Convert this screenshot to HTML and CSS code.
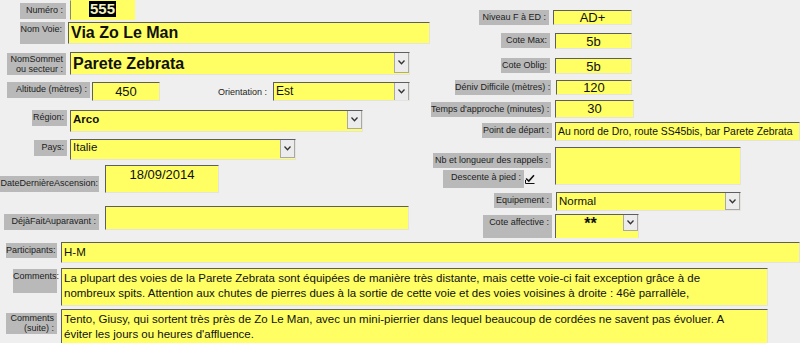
FILE: index.html
```html
<!DOCTYPE html>
<html lang="fr">
    <head>
        <meta charset="UTF-8" />
        <meta name="viewport" content="width=device-width, initial-scale=1.0"/>
        <title>Voie</title>
        <link rel="stylesheet" href="styles.css">
    </head>
    <body>
        <div class="form">
            <div class="top">
                <div class="col-left">
                    <div class="row r-numero">
                        <div class="lbl l-numero">Numéro :</div>
                        <div class="fld f-numero"><span class="sel">555</span></div>
                    </div>
                    <div class="row r-nomvoie">
                        <div class="lbl l-nomvoie">Nom Voie:</div>
                        <div class="fld f-nomvoie">Via Zo Le Man</div>
                    </div>
                    <div class="row r-sommet">
                        <div class="lbl l-sommet">NomSommet<br>ou secteur :</div>
                        <div class="fld combo f-sommet">
                            <span class="val">Parete Zebrata</span>
                            <span class="arrow"><svg width="7" height="5" viewBox="0 0 7 5"><polyline points="0.5,0.5 3.5,3.8 6.5,0.5" fill="none" stroke="#333" stroke-width="1.3"/></svg></span>
                        </div>
                    </div>
                    <div class="row r-alti">
                        <div class="lbl l-alti">Altitude (mètres) :</div>
                        <div class="fld num f-alti">450</div>
                        <div class="plain l-orient">Orientation :</div>
                        <div class="fld combo f-orient">
                            <span class="val">Est</span>
                            <span class="arrow"><svg width="7" height="5" viewBox="0 0 7 5"><polyline points="0.5,0.5 3.5,3.8 6.5,0.5" fill="none" stroke="#333" stroke-width="1.3"/></svg></span>
                        </div>
                    </div>
                    <div class="row r-region">
                        <div class="lbl l-region">Région:</div>
                        <div class="fld combo f-region">
                            <span class="val">Arco</span>
                            <span class="arrow"><svg width="7" height="5" viewBox="0 0 7 5"><polyline points="0.5,0.5 3.5,3.8 6.5,0.5" fill="none" stroke="#333" stroke-width="1.3"/></svg></span>
                        </div>
                    </div>
                    <div class="row r-pays">
                        <div class="lbl l-pays">Pays:</div>
                        <div class="fld combo f-pays">
                            <span class="val">Italie</span>
                            <span class="arrow"><svg width="7" height="5" viewBox="0 0 7 5"><polyline points="0.5,0.5 3.5,3.8 6.5,0.5" fill="none" stroke="#333" stroke-width="1.3"/></svg></span>
                        </div>
                    </div>
                    <div class="row r-date">
                        <div class="lbl l-date">DateDernièreAscension:</div>
                        <div class="fld f-date">18/09/2014</div>
                    </div>
                    <div class="row r-deja">
                        <div class="lbl l-deja">DéjàFaitAuparavant :</div>
                        <div class="fld f-deja"></div>
                    </div>
                </div>
                <div class="col-right">
                    <div class="row r-niveau">
                        <div class="lbl l-niveau">Niveau F à ED :</div>
                        <div class="fld num f-niveau">AD+</div>
                    </div>
                    <div class="row r-cotemax">
                        <div class="lbl l-cotemax">Cote Max:</div>
                        <div class="fld num f-cote">5b</div>
                    </div>
                    <div class="row r-oblig">
                        <div class="lbl l-cotemax">Cote Oblig:</div>
                        <div class="fld num f-cote">5b</div>
                    </div>
                    <div class="row r-deniv">
                        <div class="lbl l-deniv">Déniv Difficile (mètres) :</div>
                        <div class="fld num f-deniv">120</div>
                    </div>
                    <div class="row r-temps">
                        <div class="lbl l-temps">Temps d'approche (minutes) :</div>
                        <div class="fld num f-temps">30</div>
                    </div>
                    <div class="row r-depart">
                        <div class="lbl l-depart">Point de départ :</div>
                        <div class="fld f-depart">Au nord de Dro, route SS45bis, bar Parete Zebrata</div>
                    </div>
                    <div class="row r-rappels">
                        <div class="sub">
                            <div class="lbl l-rappels">Nb et longueur des rappels :</div>
                            <div class="descente">
                                <div class="lbl l-descente">Descente à pied :</div>
                                <svg class="check" width="10" height="10" viewBox="0 0 10 10"><path d="M1 4.5 L3.8 7 L9 1.2" fill="none" stroke="#111" stroke-width="1.6"/><path d="M0.5 9.5 H9.5 M0.5 6 V9.5" fill="none" stroke="#111" stroke-width="1"/></svg>
                            </div>
                        </div>
                        <div class="fld f-rappels"></div>
                    </div>
                    <div class="row r-equip">
                        <div class="lbl l-equip">Equipement :</div>
                        <div class="fld combo f-equip">
                            <span class="val">Normal</span>
                            <span class="arrow"><svg width="7" height="5" viewBox="0 0 7 5"><polyline points="0.5,0.5 3.5,3.8 6.5,0.5" fill="none" stroke="#333" stroke-width="1.3"/></svg></span>
                        </div>
                    </div>
                    <div class="row r-affect">
                        <div class="lbl l-affect">Cote affective :</div>
                        <div class="fld combo f-affect">
                            <span class="val">**</span>
                            <span class="arrow"><svg width="7" height="5" viewBox="0 0 7 5"><polyline points="0.5,0.5 3.5,3.8 6.5,0.5" fill="none" stroke="#333" stroke-width="1.3"/></svg></span>
                        </div>
                    </div>
                </div>
            </div>
            <div class="bottom">
                <div class="row r-part">
                    <div class="lbl l-part">Participants:</div>
                    <div class="fld f-part">H-M</div>
                </div>
                <div class="row r-comm">
                    <div class="lbl l-comm">Comments:</div>
                    <div class="fld memo f-comm">La plupart des voies de la Parete Zebrata sont équipées de manière très distante, mais cette voie-ci fait exception grâce à de<br>nombreux spits. Attention aux chutes de pierres dues à la sortie de cette voie et des voies voisines à droite : 46è parrallèle,</div>
                </div>
                <div class="row r-suite">
                    <div class="lbl l-suite">Comments<br>(suite) :</div>
                    <div class="fld memo f-suite">Tento, Giusy, qui sortent très près de Zo Le Man, avec un mini-pierrier dans lequel beaucoup de cordées ne savent pas évoluer. A<br>éviter les jours ou heures d'affluence.</div>
                </div>
            </div>
        </div>
    </body>
</html>
```

FILE: styles.css
```css
body {
    margin: 0;
    background-color: #efefef;
    font-family: "Liberation Sans", Arial, sans-serif;
    color: #111;
    overflow: hidden;
}
.form {
    width: 800px;
    height: 343px;
    overflow: hidden;
}
.top {
    display: flex;
    height: 240px;
}
.col-left {
    width: 430px;
}
.col-right {
    flex: 1;
}
.row {
    display: flex;
    align-items: flex-start;
}
.lbl {
    box-sizing: border-box;
    background-color: #b9b9b9;
    font-size: 9px;
    line-height: 11px;
    text-align: right;
    padding: 2px 3px 0 0;
    color: #1c1c1c;
    white-space: nowrap;
    height: 16px;
}
.plain {
    font-size: 9px;
    color: #1c1c1c;
    white-space: nowrap;
}
.fld {
    box-sizing: border-box;
    background-color: #ffff64;
    border: 1px solid;
    border-color: #5e5e5e #e4e4dc #e4e4dc #5e5e5e;
    font-size: 11.5px;
    line-height: 14px;
    padding: 1px 2px;
    white-space: nowrap;
    overflow: hidden;
}
.num {
    text-align: center;
    font-size: 13px;
    line-height: 13px;
    padding: 0;
}
.combo {
    display: flex;
    align-items: flex-start;
    padding: 0 0 0 2px;
}
.combo .val {
    flex: 1;
}
.arrow {
    box-sizing: border-box;
    width: 15px;
    height: 19px;
    background-color: #ececec;
    border: 1px solid #a8a8a8;
    border-top-color: #6e6e6e;
    display: flex;
    justify-content: center;
    align-items: center;
    margin-top: -1px;
}

/* left column */
.r-numero {
    height: 20px;
}
.l-numero {
    margin: 3px 0 0 20px;
    width: 46px;
}
.f-numero {
    margin-left: 4px;
    width: 65px;
    height: 20px;
    text-align: center;
    font-weight: bold;
    font-size: 15px;
    line-height: 16px;
    padding: 0;
    border-color: #ffff64 #ffff64 #ffff64 #8a8a60;
}
.sel {
    background-color: #000;
    color: #f3f3c4;
    padding: 0 1px;
    display: inline-block;
}
.r-nomvoie {
    margin-top: 2px;
    height: 22px;
}
.l-nomvoie {
    margin-left: 20px;
    width: 45px;
    height: 22px;
}
.f-nomvoie {
    margin-left: 3px;
    width: 362px;
    height: 22px;
    font-weight: bold;
    font-size: 16px;
    line-height: 19px;
    padding: 0 2px;
}
.r-sommet {
    margin-top: 8px;
    height: 23px;
}
.l-sommet {
    margin: 1px 0 0 7px;
    width: 59px;
    height: 22px;
    line-height: 10px;
    padding-top: 1px;
}
.f-sommet {
    margin-left: 4px;
    width: 340px;
    height: 23px;
    font-weight: bold;
    font-size: 16px;
    line-height: 21px;
}
.f-sommet .arrow {
    height: 21px;
}
.r-alti {
    margin-top: 7px;
    height: 19px;
}
.l-alti {
    margin-left: 7px;
    width: 83px;
}
.f-alti {
    margin-left: 2px;
    width: 68px;
    height: 19px;
    line-height: 17px;
}
.l-orient {
    margin: 5px 0 0 58px;
    width: 55px;
}
.f-orient {
    width: 137px;
    height: 19px;
    font-size: 12px;
    line-height: 16px;
}
.r-region {
    margin-top: 9px;
    height: 22px;
}
.l-region {
    margin-left: 32px;
    width: 35px;
}
.f-region {
    margin-left: 3px;
    width: 293px;
    height: 22px;
    font-weight: bold;
    line-height: 16px;
}
.r-pays {
    margin-top: 7px;
    height: 21px;
}
.l-pays {
    margin: 1px 0 0 34px;
    width: 33px;
}
.f-pays {
    margin-left: 3px;
    width: 226px;
    height: 21px;
    line-height: 15px;
}
.r-date {
    margin-top: 5px;
    height: 28px;
}
.l-date {
    margin-top: 11px;
    width: 99px;
    padding-right: 1px;
}
.f-date {
    margin-left: 6px;
    width: 114px;
    height: 28px;
    text-align: center;
    font-size: 13px;
    line-height: 17px;
    padding: 0;
}
.r-deja {
    margin-top: 13px;
    height: 24px;
}
.l-deja {
    margin: 8px 0 0 4px;
    width: 95px;
}
.f-deja {
    margin-left: 6px;
    width: 304px;
    height: 24px;
}

/* right column */
.r-niveau {
    margin-top: 10px;
    height: 15px;
}
.l-niveau {
    margin-left: 49px;
    width: 70px;
    height: 15px;
}
.f-niveau {
    margin-left: 4px;
    width: 79px;
    height: 15px;
}
.r-cotemax {
    margin-top: 8px;
    height: 16px;
}
.r-oblig {
    margin-top: 9px;
    height: 15px;
}
.l-cotemax {
    margin-left: 71px;
    width: 49px;
    height: 15px;
}
.f-cote {
    margin-left: 5px;
    width: 77px;
    height: 16px;
    line-height: 15px;
}
.r-deniv {
    margin-top: 7px;
    height: 15px;
}
.l-deniv {
    margin-left: 25px;
    width: 96px;
    height: 15px;
}
.f-deniv {
    margin-left: 5px;
    width: 76px;
    height: 15px;
}
.r-temps {
    margin-top: 5px;
    height: 18px;
}
.l-temps {
    margin: 2px 0 0 1px;
    width: 120px;
    height: 15px;
}
.f-temps {
    margin-left: 4px;
    width: 79px;
    height: 18px;
    line-height: 15px;
}
.r-depart {
    margin-top: 4px;
    height: 19px;
}
.l-depart {
    margin: 1px 0 0 52px;
    width: 70px;
    height: 15px;
}
.f-depart {
    margin-left: 3px;
    width: 245px;
    height: 19px;
    font-size: 10.4px;
    line-height: 14px;
    padding-top: 2px;
}
.r-rappels {
    margin-top: 6px;
    height: 41px;
}
.sub {
    width: 125px;
}
.l-rappels {
    margin: 6px 0 0 3px;
    width: 118px;
    height: 15px;
}
.descente {
    display: flex;
    align-items: flex-start;
    margin-top: 2px;
}
.l-descente {
    margin-left: 13px;
    width: 81px;
    height: 18px;
}
.check {
    margin: 4px 0 0 1px;
}
.f-rappels {
    width: 186px;
    height: 38px;
}
.r-equip {
    margin-top: 4px;
    height: 19px;
}
.l-equip {
    margin: 1px 0 0 64px;
    width: 58px;
    height: 15px;
}
.f-equip {
    margin-left: 4px;
    width: 185px;
    height: 19px;
    line-height: 16px;
}
.f-equip .arrow {
    height: 18px;
}
.r-affect {
    margin-top: 3px;
    height: 24px;
}
.l-affect {
    margin: 1px 0 0 53px;
    width: 69px;
    height: 23px;
}
.f-affect {
    margin-left: 3px;
    width: 84px;
    height: 24px;
    line-height: 18px;
    font-size: 16px;
    font-weight: bold;
    border-bottom: none;
}
.f-affect .val {
    text-align: center;
}
.f-affect .arrow {
    height: 17px;
}

/* bottom */
.bottom {
    margin-top: 2px;
}
.r-part {
    height: 21px;
}
.l-part {
    margin: 1px 0 0 6px;
    width: 51px;
    height: 15px;
}
.f-part {
    margin-left: 4px;
    width: 739px;
    height: 21px;
    line-height: 16px;
}
.r-comm {
    margin-top: 5px;
    height: 38px;
}
.l-comm {
    margin: 1px 0 0 13px;
    width: 44px;
    height: 24px;
}
.memo {
    margin-left: 4px;
    width: 707px;
    line-height: 15px;
    padding: 2px 2px 0 2px;
    white-space: nowrap;
}
.f-comm {
    height: 38px;
}
.r-suite {
    margin-top: 3px;
    height: 40px;
}
.l-suite {
    margin: 4px 0 0 6px;
    width: 51px;
    height: 21px;
    line-height: 10px;
    padding-top: 0;
}
.f-suite {
    height: 40px;
}
```
